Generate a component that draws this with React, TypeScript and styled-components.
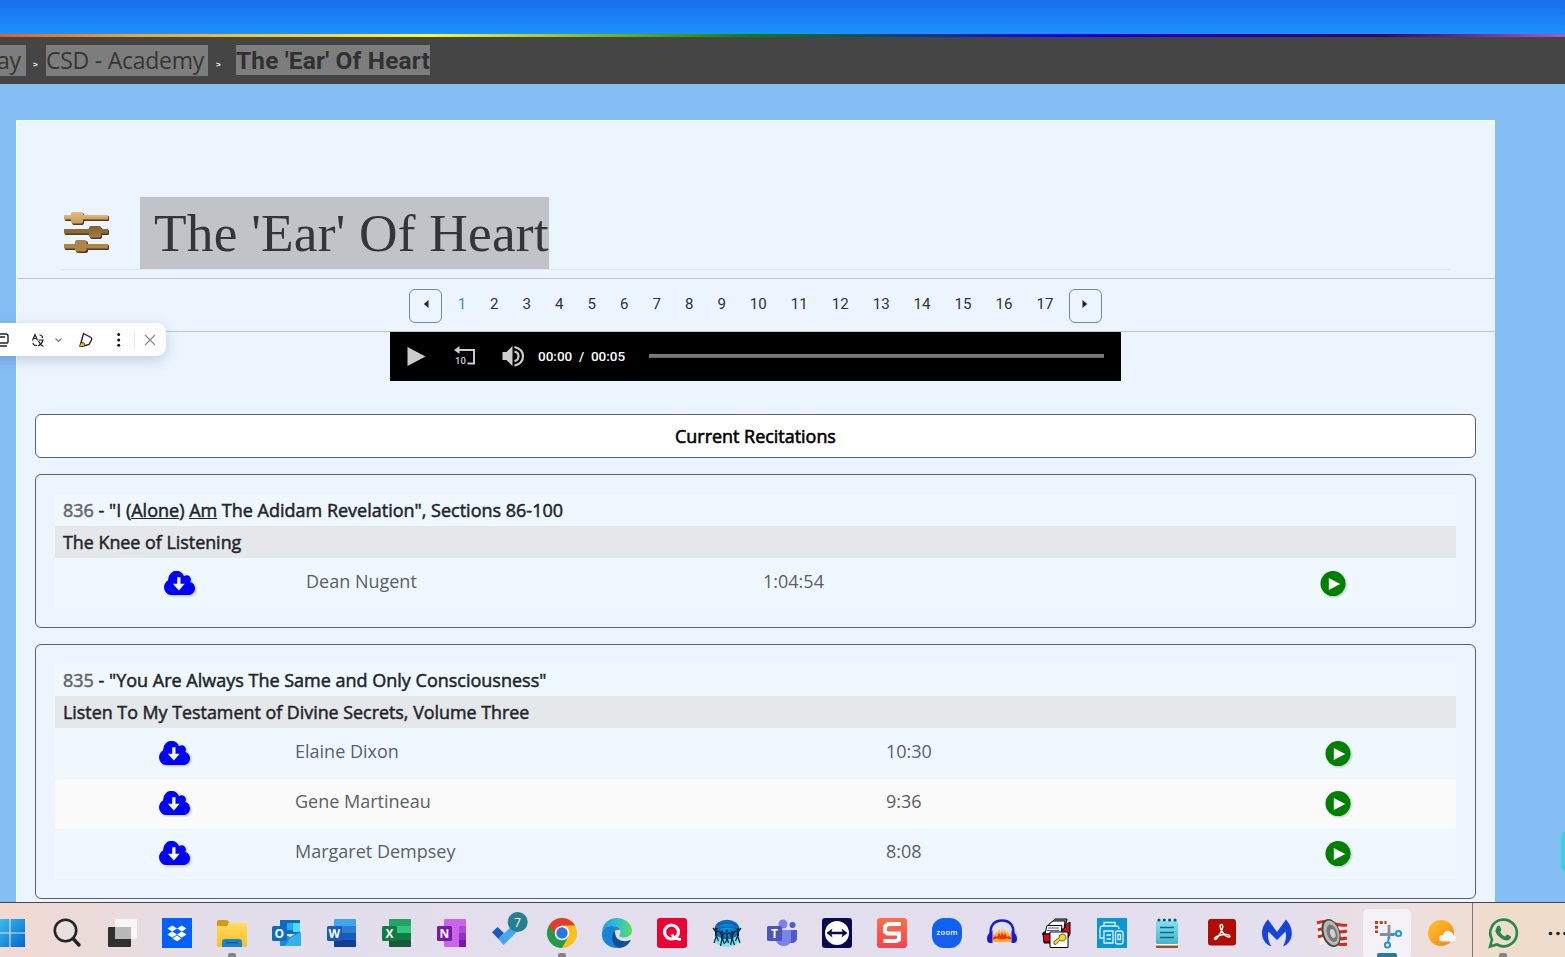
import React from "react";
import styled, { createGlobalStyle } from "styled-components";

const Global = createGlobalStyle`
  * { box-sizing: border-box; }
  body { margin: 0; overflow: hidden; font-family: "Open Sans", "Liberation Sans", sans-serif; }
`;

const Screen = styled.div`
  width: 1565px;
  height: 957px;
  display: flex;
  flex-direction: column;
  overflow: hidden;
  position: relative;
`;
const Browser = styled.div`
  height: 902px;
  overflow: hidden;
  background: #85bdf5;
`;
const TopBand = styled.div`
  height: 34px;
  background: linear-gradient(#186eec, #1d90ff);
`;
const Rainbow = styled.div`
  height: 3px;
  background: linear-gradient(90deg, #e0602a 0, #eda32f 130px, #fbf83a 430px, #0a8010 750px, #0a00f0 1060px, #330868 1385px, #a45cc4 1565px);
`;
const Breadcrumbs = styled.nav`
  height: 47px;
  background: #454545;
  display: flex;
  align-items: flex-start;
  padding-top: 8px;
  white-space: nowrap;
  color: #353535;
`;
const Crumb = styled.span<{ $width: number; $clipped?: boolean }>`
  width: ${(p) => p.$width}px;
  height: 31px;
  background: #7d7d7d;
  font-size: 23px;
  line-height: 30px;
  letter-spacing: -0.25px;
  display: flex;
  text-indent: ${(p) => (p.$clipped ? "-3px" : "0")};
`;
const LastCrumb = styled.b`
  width: 194px;
  height: 30px;
  background: #7d7d7d;
  font: bold 24.4px/32px Roboto, sans-serif;
  letter-spacing: 0.18px;
  color: #303030;
`;
const Separator = styled.span<{ $left: number; $right: number }>`
  padding: 0 ${(p) => p.$right}px 0 ${(p) => p.$left}px;
  width: ${(p) => p.$left + p.$right + 6}px;
  color: #fff;
  font: bold 8px/40px "Liberation Sans", sans-serif;
`;

const Page = styled.main`
  width: 1479px;
  height: 800px;
  margin: 36px 0 0 16px;
  background: #ecf5fe;
  border-top: 1px solid #fff;
  border-left: 1px solid #fff;
`;
const TitleRow = styled.header`
  margin: 76px 45px 0 44px;
  height: 73px;
  border-bottom: 1px solid #dfe8f0;
  display: flex;
`;
const TitleIcon = styled.svg`
  width: 46px;
  height: 42px;
  margin: 14px 31px 0 2px;
`;
const Title = styled.h1`
  margin: 0;
  width: 409px;
  height: 72px;
  padding-left: 14px;
  background: #c0c4c8;
  color: #333639;
  font: normal 53.4px/73px "Liberation Serif", serif;
  letter-spacing: 0.2px;
  white-space: nowrap;
`;
const Pager = styled.div`
  margin-top: 8px;
  height: 54px;
  border: 1px solid #bcc8d2;
  border-width: 1px 0;
  display: flex;
  justify-content: center;
  align-items: flex-start;
  padding: 10px 1px 0 0;
`;
const PageNumber = styled.a<{ $active?: boolean }>`
  padding: 0 12px;
  font: 15.07px/31px Roboto, sans-serif;
  color: ${(p) => (p.$active ? "#1c9db8" : "#2c3238")};
`;
const PagerButton = styled.button`
  width: 33px;
  height: 34px;
  margin: 0 3.6px;
  padding: 0 0 5px;
  border: 1px solid #77889a;
  border-radius: 6px;
  background: transparent;
  display: flex;
  align-items: center;
  justify-content: center;
`;
const Player = styled.div`
  width: 731px;
  height: 49px;
  margin-left: 373px;
  background: #000;
  display: flex;
  align-items: center;
  color: #fff;
`;
const PlayerIcons = styled.svg`
  width: 148px;
  height: 49px;
  fill: #ccc;
`;
const Time = styled.span`
  width: 111px;
  font: 500 13.5px/49px Roboto, sans-serif;
  white-space: pre;
`;
const Progress = styled.div`
  width: 455px;
  height: 4px;
  margin-bottom: 1px;
  background: #777;
  border-bottom: 1px solid #666;
`;
const SectionHeading = styled.h2`
  margin: 33px 19px 16px 18px;
  height: 44px;
  border: 1px solid #5a626a;
  border-radius: 6px;
  background: #fff;
  color: #000;
  font: 400 17.93px/43px "Open Sans", sans-serif;
  -webkit-text-stroke: 0.6px #000;
  text-align: center;
`;
const Card = styled.section`
  margin: 0 19px 16px 18px;
  padding: 19px 19px;
  border: 1px solid #5a626a;
  border-radius: 6px;
`;
const CardTitle = styled.div<{ $shade?: boolean }>`
  height: 32px;
  padding-left: 8px;
  font-size: ${(p) => (p.$shade ? 17.88 : 18)}px;
  line-height: 32px;
  color: #212529;
  -webkit-text-stroke: 0.5px currentColor;
  white-space: nowrap;
  background: ${(p) => (p.$shade ? "#e5e8ea" : "#eff7ff")};
`;
const Id = styled.span`
  color: #666;
`;
const Track = styled.div<{ $cols: string; $alt?: boolean; $h: number; $first: boolean }>`
  display: grid;
  grid-template-columns: ${(p) => p.$cols};
  height: ${(p) => p.$h}px;
  align-items: start;
  background: ${(p) => (p.$alt ? "#fafafa" : "#eff8ff")};
  color: #5c6064;
  font-size: 18px;
  line-height: ${(p) => (p.$first ? 46 : 44)}px;
  white-space: nowrap;
  --icon-top: ${(p) => (p.$first ? 13 : 12)}px;
`;
const IconCell = styled.div`
  display: flex;
  justify-content: center;
  padding-top: var(--icon-top);
  svg { filter: drop-shadow(1px 1px 1px rgba(0, 0, 0, 0.25)); }
`;
const TextCell = styled.div`
  padding-left: 2px;
`;

const FloatBar = styled.div`
  position: absolute;
  left: -20px;
  top: 323px;
  width: 186px;
  height: 33px;
  background: #fff;
  border-radius: 9px;
  box-shadow: 0 4px 14px rgba(40, 70, 100, 0.22);
  svg { display: block; }
`;
const SideTab = styled.div`
  position: absolute;
  left: 1561px;
  top: 831px;
  width: 12px;
  height: 41px;
  border-radius: 6px;
  background: #35d4dc;
`;

const Taskbar = styled.footer`
  height: 55px;
  border-top: 1px solid #45454d;
  background: linear-gradient(90deg, #f2d9d1 0, #ebdbd9 90px, #e2deec 230px, #e3dfee 1280px, #eedfdc 1430px, #f0dccb 1500px);
  display: flex;
`;
const Items = styled.div`
  display: flex;
  margin-left: -15.5px;
  width: 1488px;
  flex: none;
  border-right: 1px solid #77737a;
`;
const Item = styled.div`
  width: 55px;
  flex: none;
  display: flex;
  justify-content: center;
  padding-top: 15px;
  svg { overflow: visible; flex: none; }
`;
const Tail = styled.div`
  display: flex;
  padding-left: 2.5px;
`;

const Cloud = () => (
  <svg width="31" height="24" viewBox="0 0 31 24">
    <g fill="#00f" transform="scale(.016146 .01875) translate(0 -256)">
      <path d="M1920 1152q0 159-112.5 271.5t-271.5 112.5h-1088q-185 0-316.5-131.5t-131.5-316.5q0-130 70-240t188-165q-2-30-2-43 0-212 150-362t362-150q156 0 285.5 87t188.5 231q71-62 166-62 106 0 181 75t75 181q0 76-41 138 130 31 213.5 135.5t83.5 238.5z" transform="translate(0 128) scale(1 .9167)" />
    </g>
    <path d="M13.2 6.300h3.300v6.500h4.300l-6 6.600-6-6.600h4.400z" fill="#eff7ff" />
  </svg>
);
const Play = () => (
  <svg width="26" height="26" viewBox="0 0 26 26">
    <circle cx="13" cy="12.600" r="12.500" fill="#008000" />
    <path d="M8.800 7v12L20.300 13z" fill="#fff" />
  </svg>
);

const Running = ({ c = "#85808a", w = 8 }: { c?: string; w?: number }) => (
  <rect x={15 - w / 2} y="35" width={w} height="5" rx="2" fill={c} />
);
const Badge = ({ letter, fill }: { letter: string; fill: string }) => (
  <>
    <rect y="8" width="15" height="15" rx="1.5" fill={fill} />
    <text x="7.4" y="19.6" textAnchor="middle" fontSize="12" fontWeight="700" fontFamily="Open Sans" fill="#fff">{letter}</text>
  </>
);
const Office = ({ letter, dark, colors }: { letter: string; dark: string; colors: string[] }) => (
  <>
    {colors.map((c, i) => (
      <rect key={i} x="7" y={1 + i * 7} width="22" height={7.1} fill={c} rx={i === 0 || i === 3 ? 0.8 : 0} />
    ))}
    <Badge letter={letter} fill={dark} />
  </>
);

const icons: React.ReactNode[] = [
  <>
    <defs><linearGradient id="win" gradientUnits="userSpaceOnUse" x1="-2" y1="1" x2="28" y2="29"><stop stopColor="#3fc4f5" /><stop offset="1" stopColor="#0068c8" /></linearGradient></defs>
    <path fill="url(#win)" d="M-2 1h14.400v13.500H-2zM13.500 1H28v13.500H13.500zM-2 15.600h14.400V29H-2zM13.500 15.600H28V29H13.500z" />
  </>,
  <><circle cx="13.500" cy="12.500" r="10.700" fill="#e9e0e0" stroke="#242426" strokeWidth="2.600" /><path d="M21 20.500l6 6.500" stroke="#242426" strokeWidth="3.400" strokeLinecap="round" /></>,
  <><rect x="1" y="9" width="23" height="20" rx="1" fill="#303030" /><rect x="8" y="1" width="22" height="20" rx="1" fill="#f7f7f7" /><rect x="8" y="9" width="16" height="12" fill="#b9b9b9" /></>,
  <>
    <rect width="30" height="30" fill="#0061fe" />
    <path fill="#fff" d="M10.200 7.500l4.800 3-4.800 3-4.800-3zM19.800 7.500l4.800 3-4.800 3-4.800-3zM10.200 13.600l4.800 3-4.800 3-4.800-3zM19.800 13.600l4.800 3-4.800 3-4.800-3zM15 17.600l4.600 2.800-4.600 2.800-4.600-2.800z" />
  </>,
  <>
    <path d="M0 4q0-2 2-2h8l3 3h-2v4H0z" fill="#d99a10" />
    <defs><linearGradient id="fold" x2="0" y2="1"><stop stopColor="#ffdc5e" /><stop offset="1" stopColor="#f7bf26" /></linearGradient></defs>
    <path d="M0 8h10l3-3h15q2 0 2 2v20q0 2-2 2H2q-2 0-2-2z" fill="url(#fold)" />
    <path d="M5 29v-5q0-3 3-3h14q3 0 3 3v5z" fill="#1683cf" /><path d="M9 24.700h12" stroke="#0b5b9b" strokeWidth="1.400" /><Running />
  </>,
  <>
    <path d="M8 2h20v14H8z" fill="#0f6cbd" /><path d="M15 5h7v7h-7z" fill="#28a8ea" /><path d="M21 5h7v9h-7z" fill="#50d9ff" /><path d="M8 14l10 5 10-6v15H8z" fill="#1490df" /><path d="M18 20l11-6v14H13z" fill="#35b0ee" />
    <Badge letter="O" fill="#0f6cbd" />
  </>,
  <Office letter="W" dark="#185abd" colors={["#41a5ee", "#2b7cd3", "#185abd", "#103f91"]} />,
  <Office letter="X" dark="#107c41" colors={["#21a366", "#33c481", "#107c41", "#185c37"]} />,
  <>
    <rect x="7" y="1" width="22" height="28" rx="1" fill="#ca64ea" /><path d="M22 8h7v7h-7z" fill="#ae4bd5" /><path d="M22 15h7v7h-7z" fill="#9332bf" /><path d="M22 22h7v7h-7z" fill="#7719aa" />
    <Badge letter="N" fill="#7719aa" />
  </>,
  <>
    <path d="M0 14.200L5.500 9l6.500 6-5.500 6z" fill="#185abd" /><path d="M6.500 21L24 4l6 5-18.500 18z" fill="#45a5ee" />
    <circle cx="25.700" cy="4" r="10" fill="#24808e" /><text x="25.700" y="8.500" textAnchor="middle" fontSize="12.500" fontFamily="Open Sans" fill="#fff">7</text>
  </>,
  <>
    <circle cx="15" cy="15" r="15" fill="#fbc116" /><path d="M2 7.500A15 15 0 0 0 15 30l6.400-11.200L15 15z" fill="#229a4a" />
    <path d="M15 7.500h13A15 15 0 0 0 2 7.500l6 8z" fill="#e33b2e" /><circle cx="15" cy="15" r="7.300" fill="#fff" /><circle cx="15" cy="15" r="5.700" fill="#2a75e8" /><Running />
  </>,
  <>
    <defs>
      <linearGradient id="edge" x2="1"><stop stopColor="#1e9de0" /><stop offset=".5" stopColor="#2fc0cf" /><stop offset="1" stopColor="#62dc58" /></linearGradient>
    </defs>
    <path d="M0 14C1 5 7 0 15 0s15 6 15 12.500c0 4-3 7-8 7-4 0-5.500-1.500-4-3.500 2-4-2-8-8-8C5 8 1 10.500 0 14z" fill="url(#edge)" />
    <path d="M0 14.500C1 10 5 8 10 8q6.500 0 8 4-5-1.500-6.500 4-1 9 4.500 14C6 30-1 24 0 14.500z" fill="#1b83d6" />
    <path d="M12.500 13C9 17 9 27 16.500 30c5 0 9-2.500 12-7q.5-1.500-1-.8C22 24.500 14.500 22.500 13.500 17q-.5-2.500-1-4z" fill="#0f4f96" />
  </>,
  <><rect width="30" height="30" rx="3" fill="#ec0033" /><circle cx="14.500" cy="14" r="7" fill="none" stroke="#fff" strokeWidth="3.200" /><path d="M15 16.500q2 4.500 9 5" stroke="#fff" strokeWidth="3" fill="none" /></>,
  <>
    <defs><radialGradient id="globe"><stop stopColor="#08a2e8" /><stop offset=".65" stopColor="#0979cf" /><stop offset="1" stopColor="#0b62b8" /></radialGradient></defs>
    <ellipse cx="15" cy="22.500" rx="12" ry="6.500" fill="#5de6ea" opacity=".75" /><ellipse cx="15" cy="11.500" rx="12.500" ry="9.800" fill="url(#globe)" />
    <path d="M5 7q10-4 20 0M4 11q11-4 22 0" stroke="#0a4f9c" strokeWidth=".8" fill="none" />
    <g stroke="#0a2a3c" strokeWidth="1.300" fill="none"><path d="M1 10l3 4 3-1 3 4 3-2 2 1 2-1 3 2 3-4 3 1 3-4M4 13v6l-2 6M4.500 18l2 5M10 16v5l-1.500 7M10.500 21l2 5M20 16v5l-1.500 6M20 20l2.500 7M26 13v6l2 6M25.500 18l-2 5M15 15v5l-1.500 5M15 20l1.500 5" /></g>
    <g fill="#0a2a3c"><circle cx="4" cy="11.500" r="1.400" /><circle cx="10" cy="14" r="1.500" /><circle cx="15" cy="13" r="1.400" /><circle cx="20" cy="14" r="1.500" /><circle cx="26" cy="11.500" r="1.400" /><path d="M9 16h2.400v5H9zM18.800 16h2.400v5h-2.400zM3 13h2v5H3zM25 13h2v5h-2z" /></g>
  </>,
  <>
    <circle cx="25.500" cy="7" r="3" fill="#5059c9" /><path d="M20 12h10v9q-1 4-5 4h-5z" fill="#5059c9" /><circle cx="16" cy="6" r="4.500" fill="#7b83eb" /><path d="M8 12h16v9q0 7-7 7-6 0-8-5z" fill="#7b83eb" />
    <Badge letter="T" fill="#4b53bc" />
  </>,
  <><rect width="30" height="30" rx="3" fill="#080a4f" /><circle cx="15" cy="15" r="12" fill="#fff" /><path d="M4.500 15l6-4.500-1 3.200h11l-1-3.200 6 4.500-6 4.500 1-3.200h-11l1 3.200z" fill="#080a4f" /></>,
  <>
    <defs><linearGradient id="snag" x2="0" y2="1"><stop stopColor="#ff7045" /><stop offset="1" stopColor="#fa4050" /></linearGradient></defs>
    <rect width="30" height="30" rx="3" fill="url(#snag)" /><path d="M24 6H11L8 8.500v5l2.500 2H22v6L19.500 23H6.500" fill="none" stroke="#fff" strokeWidth="4" />
  </>,
  <>
    <defs><linearGradient id="zm" x2="0" y2="1"><stop stopColor="#0a64f5" /><stop offset="1" stopColor="#165cf0" /></linearGradient></defs>
    <rect width="30" height="30" rx="12" fill="url(#zm)" /><text x="15" y="17" textAnchor="middle" fontSize="7.500" fontWeight="600" fontFamily="Open Sans" fill="#fff" textLength="21">zoom</text>
  </>,
  <>
    <path d="M4 18C2 8 7 2.500 15 2.500S28 8 26 18" fill="none" stroke="#1717d8" strokeWidth="2.400" />
    <path d="M6 24V15l2 2 1-4 2 3 1-5 2 4 1-6 1 6 2-4 1 5 2-3 1 4 2-2v9z" fill="#ffae28" /><path d="M6 20l2-2 2 1 2-4 2 3 1-4 2 4 1-3 2 4 2-1 2 2v1.500l-4-1-5 1-5-1-4 1z" fill="#f52b18" />
    <path d="M5.500 12v13h-2Q0 25 0 20.500T4 14zM24.500 12v13h2q3.500 0 3.500-4.500T26 14z" fill="#1717d8" />
  </>,
  <g stroke="#000">
    <path d="M20 9l8-5v12l-5 9H2V16H0l2-2h18z" fill="#c51420" /><path d="M9 5l4-4 12 0-2 9z" fill="#999" /><path d="M7 6l4-3 12 0-1 8H6z" fill="#fff" /><path d="M5 7.500h15L19 16H3z" fill="#fff" /><path d="M6 10h11M5 12.500h12" stroke="#4455bb" />
    <path d="M1 16h8v8H2z" fill="#d80b1b" /><path d="M8 14h18v15.500H8z" fill="#fff" /><path d="M20 16a3.500 3.500 0 1 1-2 6l-4 4.500-2-.5v-2.500l5-3.500q0-4 3-4z" fill="#f5dd20" strokeWidth=".6" />
  </g>,
  <><rect width="30" height="30" fill="#0796d6" /><g fill="none" stroke="#dff3fb" strokeWidth="1.300"><path d="M7 8V4.500h11V8M7 20H3V11q0-3 3-3h13q3 0 3 3M7 13h9v12H7zM9.500 17H14M9.500 21H14" /><rect x="18.500" y="13" width="7.500" height="13" rx="2" /><path d="M21 16.500h2.500v5H21z" /></g></>,
  <>
    <defs><linearGradient id="note" x2="0" y2="1"><stop stopColor="#7fe3f1" /><stop offset="1" stopColor="#42b4cf" /></linearGradient></defs>
    <rect x="4" y="24" width="22" height="6" rx="1" fill="#a0501c" /><rect x="4" y="20" width="22" height="7.500" fill="#fff" /><rect x="4" y="3" width="22" height="23" rx="1" fill="url(#note)" /><path d="M8 9.500h14M8 14.500h14M8 19.500h14" stroke="#176682" strokeWidth="1.600" />
    <g fill="#17506b"><circle cx="7" cy="2" r="1.600" /><circle cx="12.300" cy="2" r="1.600" /><circle cx="17.600" cy="2" r="1.600" /><circle cx="23" cy="2" r="1.600" /></g>
  </>,
  <><rect x="1" y="1" width="28" height="26.500" rx="3" fill="#b30b00" /><path d="M14.500 6.500c3 0 0 8-3.500 12.500-2 3-4 3-3.500 1.500.7-2 6-4 12-4 4 0 4.500 3 1.500 2.500-4-1-8-8-8-11q0-1.500 1.500-1.500z" fill="none" stroke="#fff" strokeWidth="1.500" /></>,
  <path d="M6 1.500L15 14 24 1.500C30 8 32 17 27 24q-2 3-6 4.500c2-4 4-9 2.500-15L15 22 6.500 13.500C5 19 7 24.500 9.500 28.500 3 26 0 21 0 15 0 9.500 3 4.500 6 1.500z" fill="#1743db" />,
  <>
    <path d="M0 5q8-4 15-1t15 0v23q-8 3-15 0T3 27z" fill="#f2f0ef" /><path d="M0 5q8-3 15 0t15 2M1 12q7-3 14 0t15 1M1 19q7-3 14 0t15 1M12 26q6-1 9 0t9 0" fill="none" stroke="#d42a22" strokeWidth="3.200" />
    <g transform="rotate(-18 14 15)"><ellipse cx="14" cy="15" rx="9" ry="14.500" fill="#444" /><ellipse cx="14.500" cy="15" rx="7.500" ry="12.800" fill="#b8b8b6" /><ellipse cx="15" cy="15.500" rx="5" ry="9" fill="#777" /><ellipse cx="15.500" cy="16" rx="2.500" ry="4.500" fill="#d2d2d2" /></g>
  </>,
  <>
    <rect x="-9" y="-9" width="48" height="50" rx="5" fill="#f4f1f7" />
    <path d="M3 4.500h11.500M4.500 3v12" stroke="#c43a20" strokeWidth="3" strokeDasharray="3 1.700" fill="none" /><path d="M17 7v14M8 16.500h14" stroke="#858d96" strokeWidth="2.800" />
    <g fill="none" stroke="#2295df" strokeWidth="2"><circle cx="26.500" cy="15.500" r="2.600" /><circle cx="15.500" cy="27" r="2.600" /><path d="M17 19l-1 5M19 17l5-1" /></g><Running c="#237d94" w={20} />
  </>,
  <>
    <defs><linearGradient id="sun" x2="1" y2="1"><stop stopColor="#ffc72c" /><stop offset="1" stopColor="#f28018" /></linearGradient></defs>
    <circle cx="14" cy="15" r="13" fill="url(#sun)" /><path d="M16 23.500q-4 0-4-3.200t4-3.300q2-5 6-4t4 4q3 .5 3 3.300t-4 3.200z" fill="#f6f7fa" />
  </>,
];

const IconSvg = ({ children }: { children: React.ReactNode }) => (
  <svg width="30" height="30" viewBox="0 0 30 30">{children}</svg>
);

type Rec = { id: string; title: React.ReactNode; book: string; cols: string; tracks: [string, string][] };
const recitations: Rec[] = [
  {
    id: "836",
    title: <>"I (<u>Alone</u>) <u>Am</u> The Adidam Revelation", Sections 86-100</>,
    book: "The Knee of Listening",
    cols: "249px 457px 1fr 246px",
    tracks: [["Dean Nugent", "1:04:54"]],
  },
  {
    id: "835",
    title: <>"You Are Always The Same and Only Consciousness"</>,
    book: "Listen To My Testament of Divine Secrets, Volume Three",
    cols: "238px 591px 1fr 236px",
    tracks: [["Elaine Dixon", "10:30"], ["Gene Martineau", "9:36"], ["Margaret Dempsey", "8:08"]],
  },
];

export default function App() {
  return (
    <Screen>
      <Global />
      <Browser>
        <TopBand />
        <Rainbow />
        <Breadcrumbs>
          <Crumb $width={26} $clipped>ay</Crumb>
          <Separator $left={7} $right={7}>&gt;</Separator>
          <Crumb $width={162}>CSD - Academy</Crumb>
          <Separator $left={8} $right={14}>&gt;</Separator>
          <LastCrumb>The 'Ear' Of Heart</LastCrumb>
        </Breadcrumbs>
        <Page>
          <TitleRow>
            <TitleIcon viewBox="64 211 46 42">
              <defs>
                <linearGradient id="g1" x2="0" y2="1"><stop stopColor="#e2bd80" /><stop offset="1" stopColor="#c99b55" /></linearGradient>
                <linearGradient id="g2" x2="0" y2="1"><stop stopColor="#80602d" /><stop offset="1" stopColor="#a87e40" /></linearGradient>
              </defs>
              <g fill="#4d3c22">
                <rect x="66" y="216" width="44" height="5" rx="1" /><rect x="66" y="230" width="44" height="5" rx="1" /><rect x="66" y="245" width="44" height="5" rx="1" />
                <rect x="73" y="213" width="12" height="12" rx="2" /><rect x="91" y="227" width="12" height="12" rx="2" /><rect x="77" y="241" width="12" height="12" rx="2" />
              </g>
              <rect x="65" y="215" width="44" height="4.500" fill="url(#g1)" /><rect x="72" y="212" width="12" height="11.500" rx="2" fill="url(#g1)" />
              <rect x="65" y="229" width="44" height="4.500" fill="#8a6a38" /><rect x="90" y="226" width="12" height="11.500" rx="2" fill="url(#g2)" />
              <rect x="65" y="244" width="44" height="4.500" fill="#ad8548" /><rect x="76" y="240" width="11.500" height="11.500" rx="2" fill="#ad8548" />
            </TitleIcon>
            <Title>The 'Ear' Of Heart</Title>
          </TitleRow>
          <Pager>
            <PagerButton><svg width="6" height="8" viewBox="0 0 6 8"><path d="M5.500 0v8L.8 4z" fill="#212529" /></svg></PagerButton>
            {Array.from({ length: 17 }, (_, i) => <PageNumber key={i} $active={i === 0}>{i + 1}</PageNumber>)}
            <PagerButton><svg width="6" height="8" viewBox="0 0 6 8"><path d="M.5 0v8l4.700-4z" fill="#212529" /></svg></PagerButton>
          </Pager>
          <Player>
            <PlayerIcons viewBox="390 332 148 49">
              <path d="M407.500 347v19l18-9.500z" />
              <path d="M459 350h15v13.500h-6.500" fill="none" stroke="#ccc" strokeWidth="2" /><path d="M454 350l5.500-4v8z" />
              <text x="455" y="364" fontSize="9.500" fontWeight="500" fontFamily="Roboto">10</text>
              <path d="M502.500 352h4l6-6v20l-6-6h-4z" /><path d="M514.500 351.500q4 1 4 4.800t-4 4.800M514.500 347q8.500 2 8.500 9.300t-8.500 9.300" fill="none" stroke="#ccc" strokeWidth="2.200" />
            </PlayerIcons>
            <Time>00:00  /  00:05</Time>
            <Progress />
          </Player>
          <SectionHeading>Current Recitations</SectionHeading>
          {recitations.map((r) => (
            <Card key={r.id}>
              <CardTitle><Id>{r.id}</Id> - {r.title}</CardTitle>
              <CardTitle $shade>{r.book}</CardTitle>
              {r.tracks.map(([name, time], i) => (
                <Track key={name} $cols={r.cols} $alt={i === 1} $first={i === 0} $h={i === 0 && r.tracks.length > 1 ? 51 : 50}>
                  <IconCell><Cloud /></IconCell>
                  <TextCell>{name}</TextCell>
                  <TextCell>{time}</TextCell>
                  <IconCell><Play /></IconCell>
                </Track>
              ))}
            </Card>
          ))}
        </Page>
      </Browser>
      <Taskbar>
        <Items>
          {icons.map((icon, i) => <Item key={i}><IconSvg>{icon}</IconSvg></Item>)}
        </Items>
        <Tail>
          <Item>
            <IconSvg>
              <path d="M2 28.500l2-7A13.300 13.300 0 1 1 9 26.500z" fill="none" stroke="#24884f" strokeWidth="2.600" />
              <path d="M9 8.500q2-2 3 0l1.300 3q.3 1-1.300 2.500 2 3.500 5 4.500l2-2q1 0 4 2 0 3.500-4 4-4 0-8.500-4.500T8 11z" fill="#24884f" /><Running />
            </IconSvg>
          </Item>
          <Item><IconSvg><g fill="#222"><circle cx="7.500" cy="15.500" r="1.800" /><circle cx="15" cy="15.500" r="1.800" /><circle cx="22" cy="15.500" r="1.800" /></g></IconSvg></Item>
        </Tail>
      </Taskbar>
      <FloatBar>
        <svg width="186" height="33" viewBox="-20 323 186 33" fill="none" stroke="#222" strokeWidth="1.400">
          <path d="M-4 334H6q2 0 2 2v6q0 1-1 1H-4M-2 337H5M-2 346H7" />
          <path d="M32.500 340.500l2.500-6 2.500 6M33.500 338.500h3M39.500 335q3 0 3 3M33 343q0 2.500 4 2.500M38.500 340h4.500q-1 4-5 6M38.500 341q1.500 4 5 5.500" strokeWidth="1.200" />
          <path d="M55.500 338.500l3 3 3-3" stroke="#777" strokeWidth="1.200" />
          <path d="M83.500 333.500l7.500 4q1.200 1 .5 2.500l-2.500 4.500-5 1.500-3-3.500z" /><path d="M80.500 343l3-.5 1.500 2-1.500 2h-4z" fill="#e7b52b" strokeWidth=".8" />
          <g fill="#111" stroke="none"><circle cx="118.700" cy="334.500" r="1.500" /><circle cx="118.700" cy="340" r="1.500" /><circle cx="118.700" cy="345.200" r="1.500" /></g>
          <path d="M134.500 332v16" stroke="#e8e8ee" strokeWidth="1" /><path d="M145 335l10 10M155 335l-10 10" stroke="#888895" strokeWidth="1.200" />
        </svg>
      </FloatBar>
      <SideTab />
    </Screen>
  );
}
